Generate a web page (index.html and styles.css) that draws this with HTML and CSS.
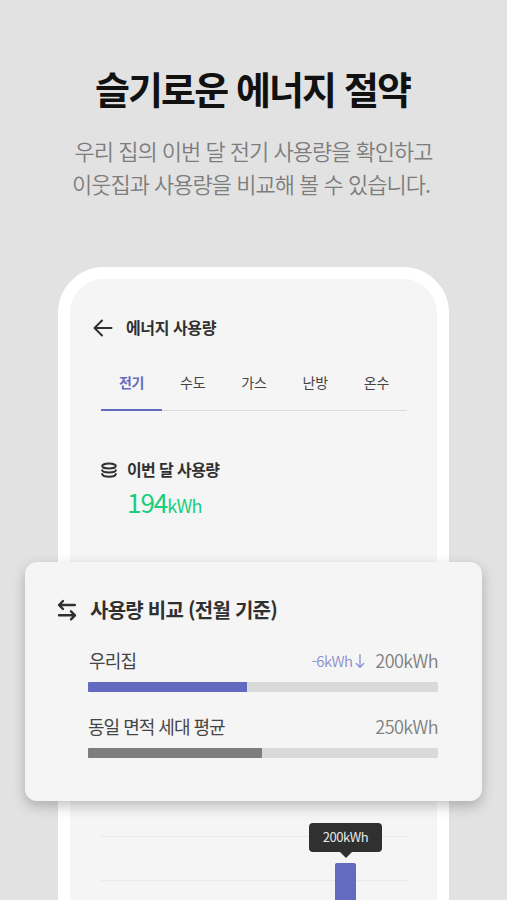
FILE: index.html
```html
<!DOCTYPE html>
<html lang="ko">
<head>
<meta charset="utf-8">
<title>슬기로운 에너지 절약</title>
<link rel="stylesheet" href="styles.css">
</head>
<body>
<main class="page">
  <header class="intro">
    <h1>슬기로운 에너지 절약</h1>
    <p class="line-one">우리 집의 이번 달 전기 사용량을 확인하고</p>
    <p class="line-two">이웃집과 사용량을 비교해 볼 수 있습니다.</p>
  </header>
  <section class="phone">
    <div class="appbar">
      <svg class="back" width="20" height="18" viewBox="0 0 20 18"><path d="M18.5 9H2M9 1.5L1.5 9L9 16.5"/></svg>
      <h2>에너지 사용량</h2>
    </div>
    <nav class="tabs">
      <span class="tab active">전기</span>
      <span class="tab">수도</span>
      <span class="tab">가스</span>
      <span class="tab">난방</span>
      <span class="tab">온수</span>
    </nav>
    <div class="usage">
      <svg class="stack" width="16" height="16" viewBox="0 0 16 16"><ellipse cx="8" cy="4" rx="6.8" ry="2.5"/><path d="M1.2 8.2c.6 3 13 3 13.6 0M1.2 12c.6 3.6 13 3.6 13.6 0"/></svg>
      <h3>이번 달 사용량</h3>
    </div>
    <p class="amount">194<small>kWh</small></p>
    <div class="chart">
      <div class="bar"><span class="tooltip">200kWh</span></div>
    </div>
  </section>
  <section class="card">
    <div class="card-head">
      <svg class="swap" width="20" height="22" viewBox="0 0 20 22"><path d="M17.8 6H2.4M6 2L2 6L6 10M2 16.3H17.8M14 12.3L18 16.3L14 20.3"/></svg>
      <h2>사용량 비교 (전월 기준)</h2>
    </div>
    <div class="row">
      <span class="label ours-label">우리집</span>
      <span class="diff">-6kWh</span>
      <svg class="down" width="10" height="15" viewBox="0 0 10 15"><path d="M5 .5V13M1.3 9.5L5 13.2L8.7 9.5"/></svg>
      <span class="value">200kWh</span>
    </div>
    <div class="track"><div class="fill ours"></div></div>
    <div class="row second">
      <span class="label">동일 면적 세대 평균</span>
      <span class="value">250kWh</span>
    </div>
    <div class="track"><div class="fill average"></div></div>
  </section>
</main>
</body>
</html>
```

FILE: styles.css
```css
* { box-sizing: border-box; margin: 0; padding: 0; }
body {
  background: #e2e2e2;
  font-family: "Noto Sans CJK KR", sans-serif;
  overflow: hidden;
}
svg { display: block; flex: none; fill: none; stroke: #303030; stroke-width: 2; stroke-linecap: round; stroke-linejoin: round; }
.page { position: relative; width: 507px; height: 900px; overflow: hidden; }
.intro { height: 267px; padding-top: 58px; white-space: nowrap; }
.intro h1 { padding-left: 95px; font-size: 38px; line-height: 60px; letter-spacing: -1.9px; font-weight: 700; color: #111; }
.intro p { font-size: 22px; line-height: 33px; letter-spacing: -1px; font-weight: 350; color: #7d7d7d; }
.intro .line-one { margin-top: 16px; padding-left: 74.5px; }
.intro .line-two { padding-left: 72px; }
.phone {
  width: 391px; height: 680px; margin-left: 58px;
  border: 12px solid #fff; border-radius: 46px;
  background: #f5f5f5; padding: 36px 31px 0;
}
.appbar { display: flex; align-items: center; height: 24px; margin-left: -8px; }
.back { margin-top: 2px; }
.appbar h2 { margin-left: 13px; font-size: 16px; line-height: 24px; letter-spacing: -.4px; font-weight: 700; color: #303030; }
.tabs { display: flex; width: 306px; height: 42px; margin-top: 30px; border-bottom: 1px solid #d9dada; }
.tab { flex: 1; height: 42px; text-align: center; font-size: 14px; line-height: 26px; letter-spacing: -.2px; color: #444; }
.tab.active { color: #626bc0; font-weight: 700; border-bottom: 2px solid #626bc0; }
.usage { display: flex; align-items: center; height: 24px; margin-top: 46px; }
.usage h3 { margin-left: 10px; font-size: 16px; line-height: 24px; letter-spacing: -.6px; font-weight: 700; color: #303030; }
.stack { margin-top: 2px; stroke-width: 2; }
.amount { margin-left: 26px; margin-top: 1px; font-size: 26px; line-height: 40px; letter-spacing: -1px; font-weight: 400; color: #18ce7d; }
.amount small { font-size: 18px; letter-spacing: -.8px; }
.chart {
  display: flex; width: 306px; height: 70px; margin-top: 311px; padding: 27px 0 0 234px;
  background: linear-gradient(#e9e9e9, #e9e9e9) 0 0 / 100% 1px no-repeat, linear-gradient(#e9e9e9, #e9e9e9) 0 44px / 100% 1px no-repeat;
}
.bar { position: relative; width: 21px; height: 60px; border-radius: 2px 2px 0 0; background: #626bc0; }
.tooltip {
  position: absolute; left: -26px; top: -40px; width: 73px; height: 29px;
  border-radius: 4px; background: #303030; color: #e8e8e8;
  font-size: 13px; line-height: 27px; letter-spacing: -.4px; text-align: center;
}
.tooltip::after {
  content: ""; position: absolute; left: 30px; top: 28px;
  border: 7px solid transparent; border-top-color: #303030; border-bottom: 0;
}
.card {
  position: absolute; left: 25px; top: 562px; width: 457px; height: 239px;
  padding: 33px 44px 0 63px; border-radius: 12px; background: #f5f5f5;
  box-shadow: 0 5px 13px rgba(0, 0, 0, .24);
  white-space: nowrap;
}
.card-head { display: flex; align-items: center; height: 30px; margin-left: -31px; }
.card-head h2 { margin-left: 13px; font-size: 20px; line-height: 30px; letter-spacing: -.75px; font-weight: 700; color: #303030; }
.swap { stroke-width: 2.4; }
.row { display: flex; align-items: center; height: 28px; margin-top: 21px; }
.row.second { margin-top: 20px; }
.label { flex: 1; font-size: 18px; line-height: 28px; letter-spacing: -1px; color: #454545; }
.ours-label { padding-left: 1px; letter-spacing: -.8px; }
.diff { margin-top: 2px; font-size: 15px; line-height: 28px; letter-spacing: -.6px; color: #8a8fcf; font-weight: 350; }
.down { margin: 2px 0 0 3px; stroke: #8a8fcf; stroke-width: 1.3; }
.value { margin: 0 0 0 10px; font-size: 18px; line-height: 28px; letter-spacing: -.55px; color: #808080; font-weight: 350; }
.track { height: 10px; margin-top: 8px; border-radius: 1px; background: #d9dada; }
.fill { height: 10px; border-radius: 1px 0 0 1px; }
.fill.ours { width: 159px; background: #626bc0; }
.fill.average { width: 174px; background: #7d7d7d; }
```
